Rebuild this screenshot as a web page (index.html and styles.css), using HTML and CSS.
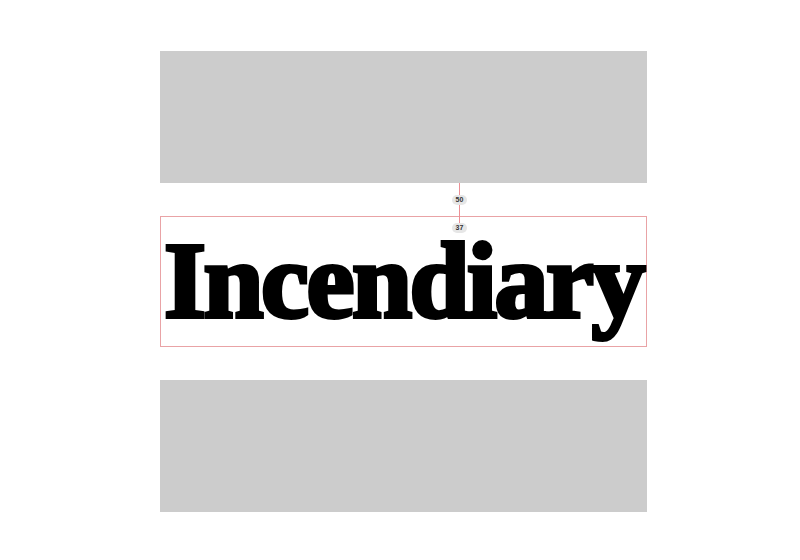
FILE: index.html
```html
<!DOCTYPE html>
<html>
<head>
<meta charset="utf-8">
<link rel="stylesheet" href="styles.css">
</head>
<body>
<div class="stack">
  <div class="block"></div>
  <div class="frame">
    <span class="word">Incendiary</span>
    <div class="measure"></div>
    <div class="badge badge-gap">50</div>
    <div class="badge badge-pad">37</div>
  </div>
  <div class="block"></div>
</div>
</body>
</html>
```
FILE: styles.css
```css
html, body {
  margin: 0;
  padding: 0;
  background: #ffffff;
}
.stack {
  width: 487px;
  margin: 51px 0 0 160px;
  display: flex;
  flex-direction: column;
  gap: 33px;
}
.block {
  height: 132px;
  background: #cccccc;
}
.frame {
  position: relative;
  box-sizing: border-box;
  height: 131px;
  border: 1px solid #e9a3a6;
  padding: 24px 0 0 3px;
  overflow: visible;
}
.word {
  display: block;
  font-family: "Liberation Serif", serif;
  font-weight: bold;
  font-size: 108px;
  line-height: 80px;
  letter-spacing: -2.5px;
  color: #000000;
  -webkit-text-stroke: 4px #000000;
  white-space: nowrap;
}
.measure {
  position: absolute;
  left: 298px;
  top: -34px;
  width: 1px;
  height: 40px;
  background: #ec8f95;
}
.badge {
  position: absolute;
  left: 291px;
  width: 15px;
  height: 10px;
  border-radius: 5px;
  background: #e6e6e6;
  color: #333333;
  font-family: "Liberation Sans", sans-serif;
  font-weight: bold;
  font-size: 7px;
  line-height: 10px;
  text-align: center;
}
.badge-gap {
  top: -22px;
}
.badge-pad {
  top: 6px;
}
```
